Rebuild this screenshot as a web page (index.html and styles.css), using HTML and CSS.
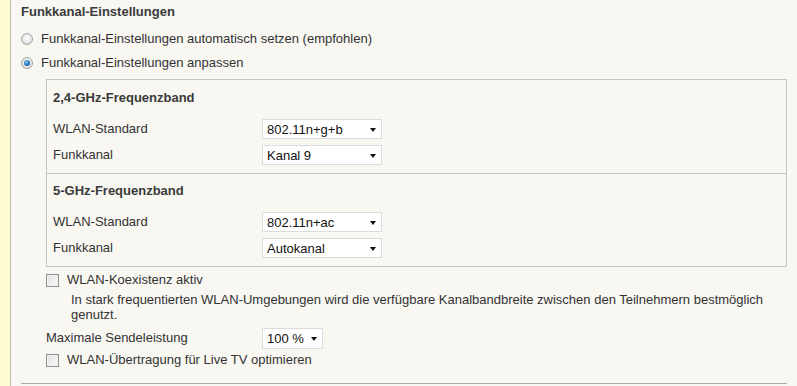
FILE: index.html
```html
<!DOCTYPE html>
<html lang="de">
<head>
  <meta charset="UTF-8" />
  <title>Funkkanal-Einstellungen</title>
  <link rel="stylesheet" href="styles.css">
</head>
<body>
  <div class="seite">
    <div class="leiste"></div>

    <!-- Inhalt -->
    <div class="inhalt">
      <h2>Funkkanal-Einstellungen</h2>

      <label class="zeile">
        <span class="radio"></span>
        Funkkanal-Einstellungen automatisch setzen (empfohlen)
      </label>
      <label class="zeile">
        <span class="radio aktiv"></span>
        Funkkanal-Einstellungen anpassen
      </label>

      <div class="kasten">
        <div class="abschnitt">
          <h3>2,4-GHz-Frequenzband</h3>
          <div class="feld">
            <span class="bezeichnung">WLAN-Standard</span>
            <div class="auswahl breit">802.11n+g+b<span class="pfeil"></span></div>
          </div>
          <div class="feld">
            <span class="bezeichnung">Funkkanal</span>
            <div class="auswahl breit">Kanal 9<span class="pfeil"></span></div>
          </div>
        </div>

        <div class="abschnitt zweiter">
          <h3>5-GHz-Frequenzband</h3>
          <div class="feld">
            <span class="bezeichnung">WLAN-Standard</span>
            <div class="auswahl breit">802.11n+ac<span class="pfeil"></span></div>
          </div>
          <div class="feld">
            <span class="bezeichnung">Funkkanal</span>
            <div class="auswahl breit">Autokanal<span class="pfeil"></span></div>
          </div>
        </div>
      </div>

      <div class="unten">
        <label class="zeile">
          <span class="haken"></span>
          WLAN-Koexistenz aktiv
        </label>
        <p class="hinweis">In stark frequentierten WLAN-Umgebungen wird die verfügbare Kanalbandbreite zwischen den Teilnehmern bestmöglich genutzt.</p>

        <div class="feld aussen">
          <span class="bezeichnung">Maximale Sendeleistung</span>
          <div class="auswahl schmal">100 %<span class="pfeil"></span></div>
        </div>

        <label class="zeile eng">
          <span class="haken"></span>
          WLAN-Übertragung für Live TV optimieren
        </label>
      </div>

      <hr class="trenner">
    </div>
  </div>
</body>
</html>
```

FILE: styles.css
```css
/* Allgemein */
body {
  margin: 0;
  font-family: "Liberation Sans", Arial, sans-serif;
  font-size: 13px;
  line-height: 16px;
  color: #333333;
  background-color: #f8f7f2;
}

.seite {
  display: flex;
  min-height: 386px;
}

.leiste {
  width: 10px;
  flex-shrink: 0;
  background-color: #fdfbd0;
  border-right: 1px solid #b7bdb0;
}

.inhalt {
  flex: 1;
  padding: 4px 10px 0 10px;
}

h2 {
  margin: 0 0 7px;
  font-size: 13px;
  line-height: 16px;
  font-weight: bold;
  color: #3a3a3a;
}

/* Zeilen mit Radio / Checkbox */
.zeile {
  display: flex;
  align-items: center;
  height: 24px;
}

.zeile.eng {
  height: 22px;
}

.radio {
  width: 12px;
  height: 12px;
  margin-right: 8px;
  border-radius: 50%;
  border: 1px solid #a5a5a5;
  box-sizing: border-box;
  background: radial-gradient(circle at 50% 40%, #ffffff 0%, #e6e6e6 55%, #cfcfcf 100%);
  display: flex;
  align-items: center;
  justify-content: center;
}

.radio.aktiv::after {
  content: "";
  width: 6px;
  height: 6px;
  border-radius: 50%;
  background: radial-gradient(circle at 40% 35%, #7fc3f0 0%, #1c6fb0 60%, #0d3f6e 100%);
}

.haken {
  width: 13px;
  height: 13px;
  margin-right: 8px;
  box-sizing: border-box;
  border: 1px solid #8e8f8f;
  background: linear-gradient(135deg, #dcdcdc 0%, #f4f4f4 70%, #ffffff 100%);
  box-shadow: inset 0 0 0 1px #f2f2f2;
}

/* Kasten mit den Frequenzbändern */
.kasten {
  margin: 4px 0 0 25px;
  border: 1px solid #c6c5c0;
}

.abschnitt {
  padding: 10px 6px 5px;
}

.abschnitt.zweiter {
  padding-top: 9px;
  border-top: 1px solid #c6c5c0;
}

h3 {
  margin: 0 0 10px;
  font-size: 13px;
  line-height: 16px;
  font-weight: bold;
  color: #3a3a3a;
}

.feld {
  display: flex;
  align-items: center;
  height: 26px;
}

.bezeichnung {
  width: 209px;
  flex-shrink: 0;
}

.feld.aussen {
  height: 22px;
}

.feld.aussen .bezeichnung {
  width: 216px;
}

/* Auswahlfelder */
.auswahl {
  position: relative;
  height: 20px;
  line-height: 19px;
  box-sizing: border-box;
  padding-left: 4px;
  background-color: #ffffff;
  border: 1px solid #dcdcdc;
  color: #111111;
}

.auswahl.breit {
  width: 120px;
}

.auswahl.schmal {
  width: 61px;
  height: 21px;
  line-height: 20px;
}

.pfeil {
  position: absolute;
  right: 5px;
  top: 8px;
  width: 0;
  height: 0;
  border-left: 3.5px solid transparent;
  border-right: 3.5px solid transparent;
  border-top: 4px solid #111111;
}

/* Unterer Bereich */
.unten {
  margin: 1px 0 0 25px;
}

.hinweis {
  margin: 0 0 5px 25px;
  line-height: 15px;
}

.trenner {
  margin: 12px 0 0;
  border: none;
  border-top: 1px solid #a8a8a8;
}
```
